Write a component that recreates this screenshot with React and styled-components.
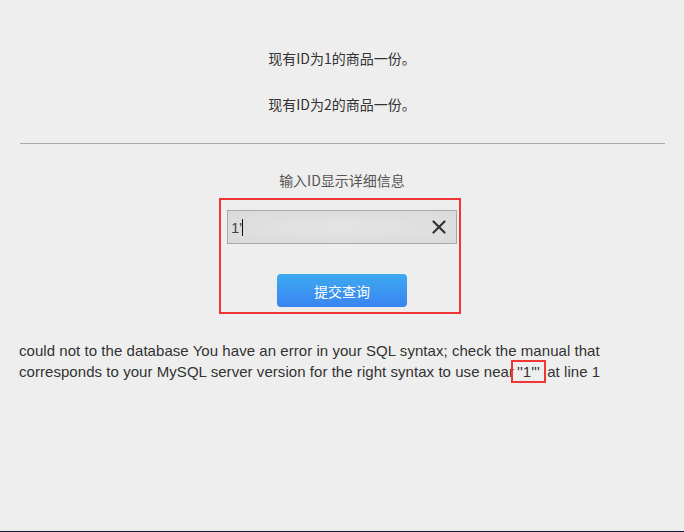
import React from "react";
import styled, { createGlobalStyle } from "styled-components";

const Global = createGlobalStyle`
  html, body { margin: 0; padding: 0; background: #eeeeee; }
  body { font-family: "Liberation Sans", "Noto Sans CJK SC", sans-serif; color: #333; }
`;

const Page = styled.div`
  height: 532px;
  box-sizing: border-box;
  overflow: hidden;
  border-bottom: 1px solid #111a33;
  display: flex;
  flex-direction: column;
  align-items: center;
  padding-top: 48px;
`;

const Item = styled.p`
  margin: 0 0 ${(p) => p.$gap}px;
  font-size: 14px;
  line-height: 20px;
  font-family: "Noto Sans CJK SC", sans-serif;
  color: #333;
`;

const Divider = styled.hr`
  align-self: stretch;
  margin: 2px 19px 0 20px;
  border: 0;
  border-top: 1px solid #aaaaaa;
`;

const Label = styled.div`
  margin-top: 26px;
  font-size: 14px;
  line-height: 20px;
  font-family: "Noto Sans CJK SC", sans-serif;
  color: #555;
`;

const Form = styled.form`
  margin: 8px 4px 0 0;
  width: 230px;
  height: 102px;
  border: 2px solid #f03535;
  display: flex;
  flex-direction: column;
  align-items: center;
  padding: 10px 2px 0 6px;
  box-sizing: content-box;
`;

const InputWrap = styled.div`
  position: relative;
  width: 230px;
  height: 34px;
  flex: none;
  box-sizing: border-box;
  border: 1px solid #a9a9a9;
  background: radial-gradient(ellipse at center, #e4e4e4 0%, #dadada 100%);
  display: flex;
  align-items: center;
`;

const Input = styled.input`
  flex: 1;
  min-width: 0;
  height: 100%;
  border: 0;
  background: transparent;
  padding: 0 30px 0 3px;
  font-size: 15px;
  color: #444;
  font-family: "Liberation Sans", sans-serif;
  outline: none;
`;

const Caret = styled.span`
  position: absolute;
  left: 14px;
  top: 8px;
  width: 1px;
  height: 17px;
  background: #111;
`;

const Clear = styled.button`
  position: absolute;
  right: 9px;
  top: 8px;
  width: 16px;
  height: 16px;
  padding: 0;
  border: 0;
  background: transparent;
  display: flex;
  align-items: center;
  justify-content: center;
`;

const Submit = styled.button`
  margin-top: 30px;
  width: 130px;
  height: 33px;
  flex: none;
  border: 0;
  border-radius: 4px;
  background: linear-gradient(to bottom, #3daaf0 0%, #3a84f2 100%);
  color: #fff;
  font-size: 14px;
  font-family: "Noto Sans CJK SC", sans-serif;
`;

const Error = styled.div`
  align-self: stretch;
  margin: 26px 0 0 19px;
  width: 600px;
  font-size: 15px;
  letter-spacing: 0.05px;
  line-height: 21px;
  color: #333;
  font-family: "Liberation Sans", sans-serif;
`;

const Mark = styled.span`
  padding: 0 3px;
  outline: 2px solid #f03535;
  outline-offset: 1px;
`;

export default function App() {
  return (
    <>
      <Global />
      <Page>
        <Item $gap={26}>现有ID为1的商品一份。</Item>
        <Item $gap={27}>现有ID为2的商品一份。</Item>
        <Divider />
        <Label>输入ID显示详细信息</Label>
        <Form onSubmit={(e) => e.preventDefault()}>
          <InputWrap>
            <Input defaultValue="1'" />
            <Caret />
            <Clear type="button" aria-label="clear">
              <svg width="14" height="14" viewBox="0 0 14 14">
                <path d="M1.5 1.5 L12.5 12.5 M12.5 1.5 L1.5 12.5" stroke="#333" strokeWidth="2.2" strokeLinecap="round" />
              </svg>
            </Clear>
          </InputWrap>
          <Submit type="submit">提交查询</Submit>
        </Form>
        <Error>
          could not to the database You have an error in your SQL syntax; check the manual that
          corresponds to your MySQL server version for the right syntax to use near
          <Mark>''1'''</Mark> at line 1
        </Error>
      </Page>
    </>
  );
}
